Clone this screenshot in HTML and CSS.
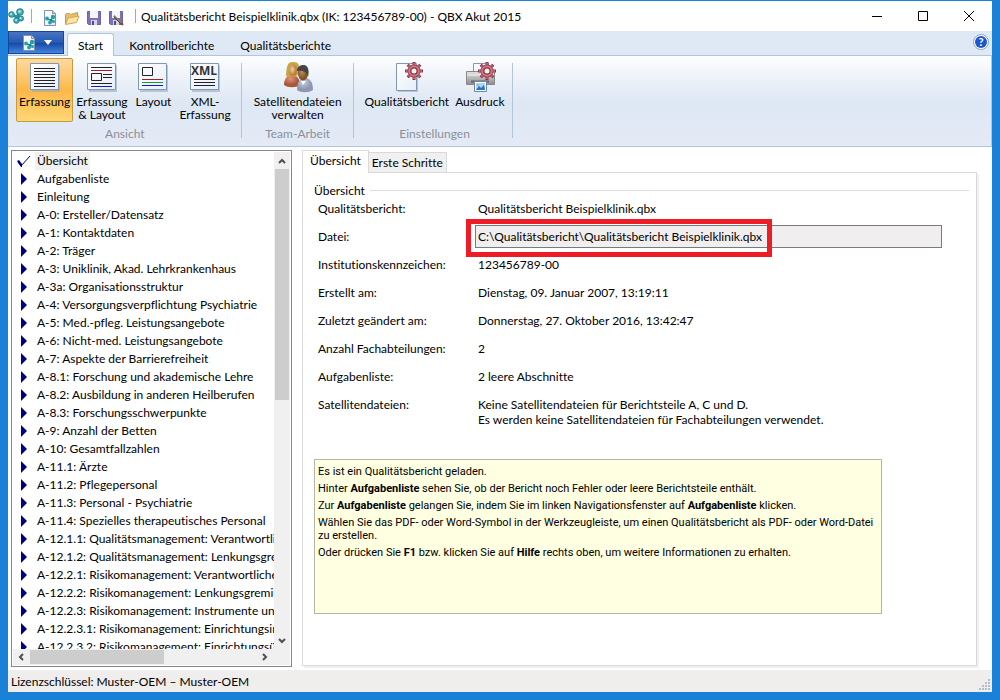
FILE: index.html
```html
<!DOCTYPE html>
<html lang="de">
<head>
<meta charset="utf-8">
<title>Qualitätsbericht Beispielklinik.qbx - QBX Akut 2015</title>
<link rel="stylesheet" href="styles.css">
</head>
<body>
<svg class="defs" width="0" height="0" aria-hidden="true">
  <defs>
    <linearGradient id="paper" x1="0" y1="0" x2="1" y2="1"><stop offset="0" stop-color="#fff"/><stop offset="1" stop-color="#e6eef9"/></linearGradient>
    <linearGradient id="metal" x1="0" y1="0" x2="0" y2="1"><stop offset="0" stop-color="#e4e4e4"/><stop offset="1" stop-color="#8c8c8c"/></linearGradient>
    <radialGradient id="skinA" cx=".4" cy=".4"><stop offset="0" stop-color="#f0cf9c"/><stop offset="1" stop-color="#b87c40"/></radialGradient>
    <radialGradient id="skinB" cx=".4" cy=".4"><stop offset="0" stop-color="#c08a55"/><stop offset="1" stop-color="#7c5029"/></radialGradient>
    <radialGradient id="coatA" cx=".4" cy=".3"><stop offset="0" stop-color="#e0957c"/><stop offset="1" stop-color="#a8553a"/></radialGradient>
    <radialGradient id="coatB" cx=".4" cy=".3"><stop offset="0" stop-color="#c9cfe0"/><stop offset="1" stop-color="#8e96b2"/></radialGradient>
    <symbol id="molecule" viewBox="0 0 16 16">
      <path d="M3.500 6.500L9 9l3-5M9 9l-1 4M13 11l-4-2" stroke="#2a939c" stroke-width="3" fill="none"/>
      <g fill="#48b3b8" stroke="#16808b"><circle cx="3.500" cy="6.500" r="2.800"/><circle cx="12" cy="4" r="3.300"/><circle cx="8.500" cy="12.500" r="2.800"/><circle cx="13" cy="10.500" r="2.500"/></g>
      <g fill="#c4eceb"><circle cx="3" cy="6" r="1"/><circle cx="11.500" cy="3.500" r="1.200"/><circle cx="8" cy="12" r="1"/><circle cx="12.500" cy="10" r="1"/></g>
    </symbol>
    <symbol id="report" viewBox="0 0 16 16">
      <path d="M2.500 .5h8l3 3v12h-11z" fill="url(#paper)" stroke="#7c92ad"/><path d="M10.500 .5v3h3" fill="#c8d7e8" stroke="#7c92ad"/>
      <path d="M5 9l4 1 3-4M9 10l-1 3M9 10l3 2" stroke="#16808b" stroke-width="1.500" fill="none"/>
      <g fill="#2b9fa5"><circle cx="5" cy="8.500" r="1.900"/><circle cx="11" cy="7" r="2.200"/><circle cx="8" cy="12.500" r="1.900"/><circle cx="11.500" cy="11.500" r="1.600"/></g>
    </symbol>
    <symbol id="gear" viewBox="0 0 18 18">
      <g stroke="#8f3342" stroke-width="3"><path d="M9 0v18M0 9h18M2.700 2.700l12.600 12.600M15.300 2.700L2.700 15.300"/></g>
      <g stroke="#cf7984" stroke-width="1.500"><path d="M9 1v16M1 9h16M3.500 3.500l11 11M14.500 3.500l-11 11"/></g>
      <circle cx="9" cy="9" r="4.500" fill="#edf1f8" stroke="#8f3342" stroke-width="4"/><circle cx="9" cy="9" r="4.800" fill="none" stroke="#cf7984" stroke-width="2"/>
    </symbol>
    <symbol id="sheet" viewBox="0 0 32 32">
      <path d="M3 3h28v27H3z" fill="#9aa9b8" opacity=".6"/><path d="M1.500 1.500h28v26h-28z" fill="url(#paper)" stroke="#8099b3"/>
    </symbol>
  </defs>
</svg>
<div class="window">
  <header class="titlebar">
    <svg class="i16" viewBox="0 0 16 16"><use href="#molecule"/></svg>
    <span class="bar"></span>
    <div class="quick">
      <button aria-label="Neu"><svg class="i16" viewBox="0 0 16 16"><use href="#report"/></svg></button>
      <button aria-label="Öffnen"><svg class="i16" viewBox="0 0 16 16"><path d="M1.500 14V4.500l1-1h3l1 1 7-2V7" fill="#e8c06d" stroke="#c99a4c"/><path d="M1.500 14.500L4 8l11-2-2.500 6.500z" fill="#ffe5a0" stroke="#d0a45c"/></svg></button>
      <button aria-label="Speichern"><svg class="i16" viewBox="0 0 16 16"><path d="M1.500 1.500h13v13h-12l-1-1z" fill="#7f71b8" stroke="#6f61a8"/><path d="M4 1h8v7H4z" fill="#f5f5ff"/><path d="M5 10h6v5H5z" fill="#d5d5e6"/><path d="M6 11h2v4H6z" fill="#55498a"/></svg></button>
      <button aria-label="Speichern unter"><svg class="i16" viewBox="0 0 16 16"><path d="M1.500 1.500h13v13h-12l-1-1z" fill="#7f71b8" stroke="#6f61a8"/><path d="M4 1h8v7H4z" fill="#f5f5ff"/><path d="M5 10h6v5H5z" fill="#d5d5e6"/><path d="M6 11h2v4H6z" fill="#55498a"/><path d="M6 6l8 8" stroke="#3b3b2b" stroke-width="2"/><path d="M6.500 6l7 7" stroke="#d8c870"/><path d="M13 13l2 2" stroke="#b23b35" stroke-width="2"/></svg></button>
    </div>
    <span class="bar"></span>
    <span class="title">Qualitätsbericht Beispielklinik.qbx (IK: 123456789-00) - QBX Akut 2015</span>
    <div class="caption">
      <button aria-label="Minimieren"><svg viewBox="0 0 12 12"><path d="M1 6.500h10"/></svg></button>
      <button aria-label="Maximieren"><svg viewBox="0 0 12 12"><path d="M1.500 1.500h9v9h-9z"/></svg></button>
      <button aria-label="Schließen"><svg viewBox="0 0 12 12"><path d="M1 1l10 10M11 1L1 11"/></svg></button>
    </div>
  </header>

  <nav class="ribbon-tabs">
    <button class="app" aria-label="Anwendungsmenü"><svg class="i16" viewBox="0 0 16 16"><use href="#report"/></svg><svg class="drop" viewBox="0 0 8 5"><path d="M0 0h8L4 5z" fill="#fff"/></svg></button>
    <button class="tab current">Start</button>
    <button class="tab">Kontrollberichte</button>
    <button class="tab">Qualitätsberichte</button>
    <button class="help" aria-label="Hilfe"><span>?</span></button>
  </nav>

  <div class="ribbon">
    <section class="group views">
      <div class="tools">
        <button class="tool active"><svg viewBox="0 0 32 32"><use href="#sheet"/><path d="M5 6.500h21M5 9.500h21M5 12.500h21M5 15.500h21M5 18.500h21M5 21.500h21M5 24.500h21" stroke="#222"/></svg>Erfassung</button>
        <button class="tool"><svg viewBox="0 0 32 32"><use href="#sheet"/><path d="M5 5.500h21M17 12.500h9M17 15.500h9M5 21.500h21" stroke="#222"/><path d="M5 8.500h21" stroke="#a02020"/><path d="M5.500 11.500h10v7h-10z" fill="none" stroke="#222"/><path d="M5 24.500h21" stroke="#1414c8"/></svg>Erfassung<br>&amp; Layout</button>
        <button class="tool roomy"><svg viewBox="0 0 32 32"><use href="#sheet"/><path d="M5.500 5.500h10v8h-10z" fill="none" stroke="#222"/><path d="M5 17.500h21" stroke="#a02020"/><path d="M5 20.500h21" stroke="#18a018"/><path d="M5 23.500h21" stroke="#1414c8"/></svg>Layout</button>
        <button class="tool"><svg viewBox="0 0 32 32"><use href="#sheet"/><text x="15" y="13" class="xml">XML</text><path d="M5 17.500h21M5 20.500h21M5 23.500h21" stroke="#222"/></svg>XML-<br>Erfassung</button>
      </div>
      <h2>Ansicht</h2>
    </section>
    <section class="group">
      <div class="tools">
        <button class="tool"><svg viewBox="0 0 32 32"><path d="M2 23c0-7 4-10 8-10s8 3 8 10c-4 3-12 3-16 0z" fill="url(#coatA)"/><path d="M4 13c1-9 1-13 7-13s7 3 6 12l-4 3-8 0z" fill="#c9a443"/><ellipse cx="11" cy="8.500" rx="4" ry="6" fill="url(#skinA)"/><path d="M15 28c0-9 4-12 8-12s8 3 8 12c-4 3-12 3-16 0z" fill="url(#coatB)"/><ellipse cx="21" cy="11.500" rx="5" ry="7" fill="url(#skinB)"/><path d="M15 9c0-5 4-6 7-6s6 4 4 12c-1-5-4-7-11-6z" fill="#444"/><path d="M19 19l2 4 3-4" fill="#fff"/></svg>Satellitendateien<br>verwalten</button>
      </div>
      <h2>Team-Arbeit</h2>
    </section>
    <section class="group settings">
      <div class="tools">
        <button class="tool"><svg viewBox="0 0 32 32"><path d="M7 3h20v27H7z" fill="#9aa9b8" opacity=".6"/><path d="M5.500 1.500h20v27h-20z" fill="url(#paper)" stroke="#8099b3"/><use href="#gear" x="14" y="0" width="18" height="18"/></svg>Qualitätsbericht</button>
        <button class="tool"><svg viewBox="0 0 32 32"><path d="M9.500 1.500h15v9h-15z" fill="url(#paper)" stroke="#8099b3"/><path d="M2.500 9.500h28v13h-28z" fill="url(#metal)" stroke="#888"/><path d="M3 13h27" stroke="#f5f5f5"/><path d="M7 19.500h18" stroke="#666" stroke-width="2"/><path d="M10.500 19.500h12v10h-12z" fill="#fff" stroke="#71869e"/><path d="M12 21h9v7h-9z" fill="#a9d7ff"/><path d="M12 28l3-4 2 2 3-3 1 5z" fill="#2374cc"/><circle cx="14" cy="23" r="1" fill="#e8a12e"/><use href="#gear" x="14" y="0" width="18" height="18"/></svg>Ausdruck</button>
      </div>
      <h2>Einstellungen</h2>
    </section>
  </div>

  <main>
    <aside class="nav">
      <ul>
        <li class="selected"><svg viewBox="0 0 14 12"><path d="M1 7l3 4L13 1" fill="none" stroke="#000080"/><path d="M0 6l2-1 3 4v3H4z" fill="#000080"/></svg><button>Übersicht</button></li>
        <li><i></i><button>Aufgabenliste</button></li>
        <li><i></i><button>Einleitung</button></li>
        <li><i></i><button>A-0: Ersteller/Datensatz</button></li>
        <li><i></i><button>A-1: Kontaktdaten</button></li>
        <li><i></i><button>A-2: Träger</button></li>
        <li><i></i><button>A-3: Uniklinik, Akad. Lehrkrankenhaus</button></li>
        <li><i></i><button>A-3a: Organisationsstruktur</button></li>
        <li><i></i><button>A-4: Versorgungsverpflichtung Psychiatrie</button></li>
        <li><i></i><button>A-5: Med.-pfleg. Leistungsangebote</button></li>
        <li><i></i><button>A-6: Nicht-med. Leistungsangebote</button></li>
        <li><i></i><button>A-7: Aspekte der Barrierefreiheit</button></li>
        <li><i></i><button>A-8.1: Forschung und akademische Lehre</button></li>
        <li><i></i><button>A-8.2: Ausbildung in anderen Heilberufen</button></li>
        <li><i></i><button>A-8.3: Forschungsschwerpunkte</button></li>
        <li><i></i><button>A-9: Anzahl der Betten</button></li>
        <li><i></i><button>A-10: Gesamtfallzahlen</button></li>
        <li><i></i><button>A-11.1: Ärzte</button></li>
        <li><i></i><button>A-11.2: Pflegepersonal</button></li>
        <li><i></i><button>A-11.3: Personal - Psychiatrie</button></li>
        <li><i></i><button>A-11.4: Spezielles therapeutisches Personal</button></li>
        <li><i></i><button>A-12.1.1: Qualitätsmanagement: Verantwortliche Person</button></li>
        <li><i></i><button>A-12.1.2: Qualitätsmanagement: Lenkungsgremium</button></li>
        <li><i></i><button>A-12.2.1: Risikomanagement: Verantwortliche Person</button></li>
        <li><i></i><button>A-12.2.2: Risikomanagement: Lenkungsgremium</button></li>
        <li><i></i><button>A-12.2.3: Risikomanagement: Instrumente und Maßnahmen</button></li>
        <li><i></i><button>A-12.2.3.1: Risikomanagement: Einrichtungsinterne</button></li>
        <li><i></i><button>A-12.2.3.2: Risikomanagement: Einrichtungsübergreifende</button></li>
      </ul>
      <div class="vscroll">
        <svg viewBox="0 0 8 6"><path d="M1 5l3-3 3 3"/></svg><span class="thumb"></span><span class="track"></span><svg viewBox="0 0 8 6"><path d="M1 1l3 3 3-3"/></svg>
      </div>
      <div class="hscroll">
        <svg viewBox="0 0 6 8"><path d="M5 1L2 4l3 3"/></svg><span class="thumb"></span><span class="track"></span><svg viewBox="0 0 6 8"><path d="M1 1l3 3-3 3"/></svg>
      </div>
      <div class="corner"></div>
    </aside>

    <section class="pages">
      <div class="page-tabs"><button class="on">Übersicht</button><button>Erste Schritte</button></div>
      <div class="page">
        <h1>Übersicht</h1>
        <dl>
          <dt>Qualitätsbericht:</dt><dd>Qualitätsbericht Beispielklinik.qbx</dd>
          <dt><label for="datei">Datei:</label></dt><dd class="file"><input id="datei" readonly value="C:\Qualitätsbericht\Qualitätsbericht Beispielklinik.qbx"><span class="marker"></span></dd>
          <dt>Institutionskennzeichen:</dt><dd>123456789-00</dd>
          <dt>Erstellt am:</dt><dd>Dienstag, 09. Januar 2007, 13:19:11</dd>
          <dt>Zuletzt geändert am:</dt><dd>Donnerstag, 27. Oktober 2016, 13:42:47</dd>
          <dt>Anzahl Fachabteilungen:</dt><dd>2</dd>
          <dt>Aufgabenliste:</dt><dd>2 leere Abschnitte</dd>
          <dt>Satellitendateien:</dt><dd>Keine Satellitendateien für Berichtsteile A, C und D.<br>Es werden keine Satellitendateien für Fachabteilungen verwendet.</dd>
        </dl>
        <div class="hint">
          <p>Es ist ein Qualitätsbericht geladen.</p>
          <p>Hinter <b>Aufgabenliste</b> sehen Sie, ob der Bericht noch Fehler oder leere Berichtsteile enthält.</p>
          <p>Zur <b>Aufgabenliste</b> gelangen Sie, indem Sie im linken Navigationsfenster auf <b>Aufgabenliste</b> klicken.</p>
          <p>Wählen Sie das PDF- oder Word-Symbol in der Werkzeugleiste, um einen Qualitätsbericht als PDF- oder Word-Datei zu erstellen.</p>
          <p>Oder drücken Sie <b>F1</b> bzw. klicken Sie auf <b>Hilfe</b> rechts oben, um weitere Informationen zu erhalten.</p>
        </div>
      </div>
    </section>
  </main>

  <footer>
    <span>Lizenzschlüssel: Muster-OEM – Muster-OEM</span>
    <svg class="grip" viewBox="0 0 12 12"><path d="M9 0h2v2H9zM6 3h2v2H6zM9 3h2v2H9zM3 6h2v2H3zM6 6h2v2H6zM9 6h2v2H9zM0 9h2v2H0zM3 9h2v2H3zM6 9h2v2H6zM9 9h2v2H9z" fill="#b4bccd"/></svg>
  </footer>
</div>
</body>
</html>
```
FILE: styles.css
```css
* { box-sizing: border-box; }
body {
  margin: 0;
  height: 100vh;
  padding: 1px 8px 8px;
  background: #1b80d8;
  color: #000;
  font: 12px/15px Lato, "Noto Sans", sans-serif;
  font-variant-ligatures: none;
}
button, input { font: inherit; font-variant-ligatures: none; color: inherit; border: 0; background: none; padding: 0; margin: 0; }
h1, h2, p, ul, dl, dd { margin: 0; padding: 0; font-size: inherit; font-weight: normal; }
svg { display: block; flex: none; }
.defs { position: absolute; }
.i16 { width: 16px; height: 16px; }

.window { height: 100%; display: flex; flex-direction: column; background: #fff; }

.titlebar { height: 30px; flex: none; display: flex; align-items: center; white-space: nowrap; }
.bar { width: 1px; height: 14px; background: #a8a8a8; margin: 0 5px 0 7px; }
.quick { display: flex; gap: 6px; padding: 4px 4px 0 5px; }
.title { flex: 1; }
.caption { display: flex; }
.caption button { width: 46px; height: 28px; display: grid; place-items: center; }
.caption svg { width: 12px; height: 12px; fill: none; stroke: #000; }

.ribbon-tabs { height: 25px; flex: none; display: flex; align-items: flex-end; background: #dfe9f5; border-bottom: 1px solid #b3c5da; }
.app {
  width: 56px; height: 23px; margin-right: 3px; align-self: flex-start;
  display: flex; align-items: center; justify-content: center; gap: 7px;
  border: 1px solid #16459c;
  background: linear-gradient(#4775bf, #2459b3 50%, #1347a3 51%, #4484da);
}
.drop { width: 8px; height: 5px; }
.tab { height: 20px; }
.tab.current {
  padding: 0 10px; height: 23px; margin-bottom: -1px;
  border: 1px solid #b3c5da; border-bottom: 0; border-radius: 3px 3px 0 0; background: #fcfdff;
}
.tab + .tab { padding: 0 11px 0 15px; }
.help { margin: 0 3px 5px auto; width: 16px; height: 16px; border-radius: 50%; border: 1px solid #8fa6c4; background: #fff; padding: 1px; }
.help span { display: block; height: 12px; border-radius: 50%; background: #1c55d0; color: #fff; font-weight: bold; font-size: 11px; line-height: 12px; }

.ribbon {
  height: 91px; flex: none; display: flex; padding-left: 3px;
  border: solid #b3c5da; border-width: 0 1px 1px 0;
  background: linear-gradient(#fdfeff, #eaf0f8 30%, #dde8f4 52%, #e4eaf6);
}
.group { display: flex; flex-direction: column; padding: 2px 9px 0; position: relative; }
.group.views { padding: 2px 8px 0 5px; }
.group.settings { padding: 2px 5px 0 8px; }
.group::after { content: ""; position: absolute; right: 0; top: 7px; bottom: 8px; width: 1px; background: #b3c5da; }
.tools { display: flex; height: 66px; }
.tool {
  display: flex; flex-direction: column; align-items: center; white-space: nowrap;
  line-height: 13px; padding: 3px 2px 0; border: 1px solid transparent; border-radius: 2px;
}
.tool.roomy { padding: 3px 4px 0; }
.tool svg { width: 32px; height: 32px; margin-bottom: 1px; }
.tool.active { border-color: #c79a3b; background: linear-gradient(#fcd9a0, #fdc367 35%, #fdb748 50%, #fed876); }
.xml { font: bold 12px "Open Sans", sans-serif; fill: #333; text-anchor: middle; }
.group h2 { text-align: center; color: #8a8f98; line-height: 24px; }

main { flex: 1; min-height: 0; display: grid; grid-template-columns: 281px minmax(0, 1fr); gap: 10px; padding: 3px 14px 3px 3px; }
.nav {
  display: grid; grid-template: minmax(0, 1fr) 16px / minmax(0, 1fr) 16px;
  border: 1px solid #828790; padding: 1px; min-height: 0; background: #fff;
}
.nav ul { list-style: none; overflow: hidden; }
.nav li { height: 18px; display: flex; align-items: center; white-space: nowrap; }
.nav li svg { width: 14px; height: 12px; margin: 0 4px; }
.nav li i { flex: none; width: 6px; margin: 0 8px; border: solid transparent; border-width: 6px 0 6px 6px; border-left-color: #000080; }
.nav li button { height: 18px; padding: 0 2px 2px; }
.nav li.selected button { background: #f0f0f0; }
.vscroll, .hscroll, .corner { background: #f0f0f0; display: flex; align-items: center; }
.vscroll { flex-direction: column; }
.vscroll svg { width: 8px; height: 6px; margin: 6px 0 5px; }
.vscroll .thumb { width: 14px; flex: 231; background: #cdcdcd; }
.vscroll .track { flex: 232; }
.vscroll svg, .hscroll svg { fill: none; stroke: #505050; stroke-width: 2; }
.hscroll svg { width: 6px; height: 8px; margin: 0 6px 0 5px; }
.hscroll .thumb { height: 14px; flex: 133; background: #cdcdcd; }
.hscroll .track { flex: 93; }

.pages { display: flex; flex-direction: column; min-width: 0; padding: 0 1px 1px 0; }
.page-tabs { display: flex; align-items: flex-end; height: 23px; margin-bottom: -1px; z-index: 1; }
.page-tabs button { height: 20px; margin-bottom: 1px; padding: 0 3px; background: #f0f0f0; border: 1px solid #d9d9d9; border-left: 0; border-bottom: 0; }
.page-tabs .on { height: 23px; margin: 0; padding: 0 7px 3px; background: #fff; border-left: 1px solid #d9d9d9; }
.page { flex: 1; border: 1px solid #d9d9d9; box-shadow: 2px 2px 0 #f0f0f0; padding: 10px 7px 0 11px; }
h1 { display: flex; align-items: center; gap: 5px; height: 15px; }
h1::after { content: ""; flex: 1; height: 1px; background: #dcdcdc; }
dl { display: grid; grid-template-columns: 160px minmax(0, 1fr); grid-auto-rows: minmax(28px, auto); padding: 3px 27px 0 4px; }
.file { position: relative; }
.file input { display: block; width: calc(100% + 3px); height: 23px; margin: -4px 0 0 -3px; padding: 0 2px; border: 1px solid #7a7a7a; background: #f0eeee; }
.marker { position: absolute; left: -12px; top: -10px; width: 306px; height: 38px; border: 5px solid #ee1c25; }
.hint {
  width: 568px; max-width: 100%; height: 155px; margin-top: 32px; padding: 3px 0 3px 3px;
  border: 1px solid #b4b4a8; background: #ffffe1;
  font: 11px/13px Roboto, "Liberation Sans", sans-serif;
}
.hint p { margin: 2px 0 4px; }

footer { height: 22px; flex: none; display: flex; align-items: center; justify-content: space-between; padding: 0 1px 0 3px; background: #f0eded; }
.grip { width: 12px; height: 12px; align-self: flex-end; margin-bottom: 1px; }
```
